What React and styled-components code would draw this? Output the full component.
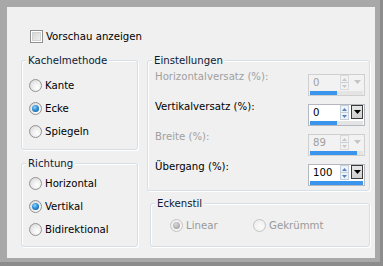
import React from 'react';
import styled, { createGlobalStyle } from 'styled-components';

const Global = createGlobalStyle`
  html, body { margin: 0; padding: 0; background: #a6a6a6; }
  body {
    font-family: "DejaVu Sans Condensed", "DejaVu Sans", sans-serif;
    font-size: 11.3px;
    color: #000;
  }
`;

const Frame = styled.div`
  width: 383px;
  height: 266px;
  box-sizing: border-box;
  padding: 7px 8px 8px 7px;
  background: #a8a8a8;
  box-shadow: inset -3px -4px 0 #8c8c8c;
`;

const Panel = styled.div`
  width: 100%;
  height: 100%;
  box-sizing: border-box;
  background: #f0f0f0;
  padding: 16px 5px 0 14px;
  display: flex;
  flex-direction: column;
`;

const CheckRow = styled.label`
  display: flex;
  align-items: center;
  gap: 3px;
  height: 27px;
  margin-left: 9px;
`;

const CheckBox = styled.span`
  width: 13px;
  height: 13px;
  box-sizing: border-box;
  border: 1px solid #8e8f8f;
  background: #f4f4f4;
  box-shadow: inset 0 0 0 1px #fff, inset 0 0 0 2px #d2d2d2;
  background-image: linear-gradient(135deg, #cfcfcf, #f7f7f7);
`;

const Columns = styled.div`
  display: flex;
  gap: 9px;
  margin-top: 4px;
  align-items: flex-start;
`;

const Column = styled.div`
  width: ${(p) => p.$w}px;
  display: flex;
  flex-direction: column;
  gap: ${(p) => p.$gap}px;
`;

const Group = styled.fieldset`
  margin: 0 0 0 ${(p) => p.$ml || 0}px;
  padding: 0;
  min-width: 0;
  border: 1px solid #d5dfe5;
  border-radius: 3px;
  box-shadow: inset 1px 1px 0 #fff, 1px 1px 0 #fff;
`;

const Legend = styled.legend`
  margin-left: 4px;
  padding: 0 2px;
  line-height: 13px;
  color: #0c1a36;
  background: #f0f0f0;
`;

const Body = styled.div`
  padding: ${(p) => p.$pt}px 4px ${(p) => p.$pb}px ${(p) => p.$pl}px;
`;

const RadioGrid = styled.div`
  display: grid;
  grid-template-columns: ${(p) => p.$cols || '1fr'};
`;

const RadioRow = styled.div`
  display: flex;
  align-items: center;
  gap: 3px;
  height: 23px;
  color: ${(p) => (p.$disabled ? '#9a9a9a' : '#000')};
`;

const RadioCircle = styled.span`
  position: relative;
  width: 13px;
  height: 13px;
  box-sizing: border-box;
  border-radius: 50%;
  border: 1px solid ${(p) => (p.$disabled ? '#c4c4c4' : '#939393')};
  background: ${(p) =>
    p.$disabled
      ? 'radial-gradient(circle at 60% 60%, #fbfbfb, #e9e9e9)'
      : 'radial-gradient(circle at 65% 65%, #ffffff 0%, #f0f0f0 40%, #d0d0d0 100%)'};
  flex: none;
`;

const RadioDot = styled.span`
  position: absolute;
  left: 2px;
  top: 2px;
  width: 7px;
  height: 7px;
  border-radius: 50%;
  background: ${(p) =>
    p.$disabled
      ? 'radial-gradient(circle at 40% 35%, #d8d8d8, #a3a3a3 80%)'
      : 'radial-gradient(circle at 40% 35%, #8ed6ff 0%, #2f8fd6 45%, #0d4c87 100%)'};
`;

const Row = styled.div`
  display: flex;
  align-items: flex-start;
  height: 30px;
`;

const Label = styled.span`
  flex: 1;
  line-height: 13px;
  color: ${(p) => (p.$disabled ? '#a0a0a0' : '#000')};
`;

const Spin = styled.div`
  width: 57px;
  height: 22px;
  margin-top: 4px;
  box-sizing: border-box;
  border: 1px solid ${(p) => (p.$disabled ? '#cfcfcf' : '#b4b7bd')};
  background: ${(p) => (p.$disabled ? '#f2f2f2' : '#fff')};
  display: flex;
  flex-direction: column;
`;

const SpinTop = styled.div`
  display: flex;
  height: 15px;
`;

const Value = styled.span`
  flex: 1;
  padding-left: 4px;
  line-height: 15px;
  color: ${(p) => (p.$disabled ? '#a0a0a0' : '#000')};
`;

const Arrows = styled.span`
  width: 9px;
  display: flex;
  flex-direction: column;
  border: 1px solid ${(p) => (p.$disabled ? '#dadada' : '#c4cfdc')};
  box-sizing: border-box;
  margin-right: 2px;
  background: ${(p) => (p.$disabled ? '#f2f2f2' : '#eef3f9')};
`;

const ArrowHalf = styled.span`
  flex: 1;
  display: flex;
  align-items: center;
  justify-content: center;
  & + & { border-top: 1px solid ${(p) => (p.$disabled ? '#dadada' : '#c4cfdc')}; }
`;

const Drop = styled.span`
  width: 12px;
  height: 14px;
  box-sizing: border-box;
  margin-right: 1px;
  display: flex;
  align-items: center;
  justify-content: center;
  border: 1px solid ${(p) => (p.$disabled ? 'transparent' : '#3a3a3a')};
  background: ${(p) => (p.$disabled ? 'transparent' : 'linear-gradient(#e6e6e6, #cfcfcf)')};
`;

const Track = styled.div`
  height: 4px;
  margin: 1px 1px 0 1px;
  background: #e4e4e4;
  display: flex;
`;

const Fill = styled.div`
  height: 100%;
  background: #3b95ec;
`;

const Tri = ({ up, color, w = 5 }) => (
  <svg width={w} height={3} viewBox="0 0 5 3">
    <polygon points={up ? '0,3 5,3 2.5,0' : '0,0 5,0 2.5,3'} fill={color} />
  </svg>
);

const Radio = ({ label, checked, disabled }) => (
  <RadioRow $disabled={disabled}>
    <RadioCircle $disabled={disabled}>{checked && <RadioDot $disabled={disabled} />}</RadioCircle>
    <span>{label}</span>
  </RadioRow>
);

const SpinField = ({ value, frac, disabled }) => (
  <Spin $disabled={disabled}>
    <SpinTop>
      <Value $disabled={disabled}>{value}</Value>
      <Arrows $disabled={disabled}>
        <ArrowHalf $disabled={disabled}><Tri up color={disabled ? '#c8c8c8' : '#5b82bf'} /></ArrowHalf>
        <ArrowHalf $disabled={disabled}><Tri color={disabled ? '#c8c8c8' : '#5b82bf'} /></ArrowHalf>
      </Arrows>
      <Drop $disabled={disabled}>
        <svg width="7" height="4" viewBox="0 0 7 4">
          <polygon points="0,0 7,0 3.5,4" fill={disabled ? '#c4c4c4' : '#000'} />
        </svg>
      </Drop>
    </SpinTop>
    <Track>
      <Fill style={{ width: `${frac * 100}%` }} />
    </Track>
  </Spin>
);

const settings = [
  { label: 'Horizontalversatz (%):', value: '0', frac: 0.5, disabled: true },
  { label: 'Vertikalversatz (%):', value: '0', frac: 0.5, disabled: false },
  { label: 'Breite (%):', value: '89', frac: 0.89, disabled: true },
  { label: 'Übergang (%):', value: '100', frac: 1, disabled: false },
];

export default function App() {
  return (
    <>
      <Global />
      <Frame>
        <Panel>
          <CheckRow>
            <CheckBox />
            <span>Vorschau anzeigen</span>
          </CheckRow>
          <Columns>
            <Column $w={117} $gap={7}>
              <Group>
                <Legend>Kachelmethode</Legend>
                <Body $pt={7} $pb={6} $pl={7}>
                  <Radio label="Kante" />
                  <Radio label="Ecke" checked />
                  <Radio label="Spiegeln" />
                </Body>
              </Group>
              <Group>
                <Legend>Richtung</Legend>
                <Body $pt={2} $pb={5} $pl={7}>
                  <Radio label="Horizontal" />
                  <Radio label="Vertikal" checked />
                  <Radio label="Bidirektional" />
                </Body>
              </Group>
            </Column>
            <Column $w={223} $gap={6}>
              <Group>
                <Legend>Einstellungen</Legend>
                <Body $pt={3} $pb={0} $pl={7}>
                  {settings.map((s) => (
                    <Row key={s.label}>
                      <Label $disabled={s.disabled}>{s.label}</Label>
                      <SpinField value={s.value} frac={s.frac} disabled={s.disabled} />
                    </Row>
                  ))}
                </Body>
              </Group>
              <Group $ml={3}>
                <Legend>Eckenstil</Legend>
                <Body $pt={4} $pb={9} $pl={19}>
                  <RadioGrid $cols="83px 1fr">
                    <Radio label="Linear" checked disabled />
                    <Radio label="Gekrümmt" disabled />
                  </RadioGrid>
                </Body>
              </Group>
            </Column>
          </Columns>
        </Panel>
      </Frame>
    </>
  );
}
